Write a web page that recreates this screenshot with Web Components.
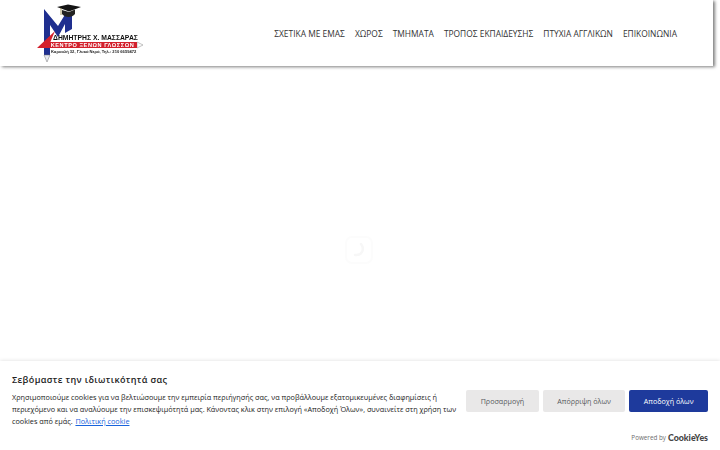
<!DOCTYPE html>
<html lang="el">
<head>
<meta charset="utf-8">
<title>Massaras</title>
<style>
  html, body { margin: 0; height: 100%; background: #fff; overflow: hidden; }
  body { display: flex; flex-direction: column; font-family: "Open Sans", "Noto Sans", sans-serif; }
</style>
</head>
<body>
<site-header>
  <site-logo slot="logo"></site-logo>
  <nav-link>ΣΧΕΤΙΚΑ ΜΕ ΕΜΑΣ</nav-link>
  <nav-link>ΧΩΡΟΣ</nav-link>
  <nav-link>ΤΜΗΜΑΤΑ</nav-link>
  <nav-link>ΤΡΟΠΟΣ ΕΚΠΑΙΔΕΥΣΗΣ</nav-link>
  <nav-link>ΠΤΥΧΙΑ ΑΓΓΛΙΚΩΝ</nav-link>
  <nav-link>ΕΠΙΚΟΙΝΩΝΙΑ</nav-link>
</site-header>
<page-loader></page-loader>
<cookie-banner>
  <span slot="title">Σεβόμαστε την ιδιωτικότητά σας</span>
  <span>Χρησιμοποιούμε cookies για να βελτιώσουμε την εμπειρία περιήγησής σας, να προβάλλουμε εξατομικευμένες διαφημίσεις ή περιεχόμενο και να αναλύουμε την επισκεψιμότητά μας. Κάνοντας κλικ στην επιλογή «Αποδοχή Όλων», συναινείτε στη χρήση των</span>
  <span>cookies από εμάς.</span>
  <a>Πολιτική cookie</a>
  <cookie-button slot="actions">Προσαρμογή</cookie-button>
  <cookie-button slot="actions">Απόρριψη όλων</cookie-button>
  <cookie-button slot="actions" primary>Αποδοχή όλων</cookie-button>
</cookie-banner>

<script>
// small helper so each element stays a few lines
function shadow(el, html) {
  el.attachShadow({ mode: 'open' });
  el.shadowRoot.innerHTML = html;
}

class SiteHeader extends HTMLElement {
  constructor() {
    super();
    shadow(this, `
      <style>
        :host { display: flex; flex: none; height: 66px; margin-right: 7px; box-sizing: border-box;
          align-items: center; justify-content: space-between; padding: 0 36px 0 36px; background: #fff;
          box-shadow: 2px 1px 3px rgba(0,0,0,.5); }
        nav { display: flex; gap: 10px; padding-top: 1px; }
      </style>
      <slot name="logo"></slot>
      <nav><slot></slot></nav>`);
  }
}

class NavLink extends HTMLElement {
  constructor() {
    super();
    shadow(this, `
      <style>
        :host { display: block; font: 400 8.41px/16px "Open Sans", sans-serif; color: #333; white-space: nowrap; }
      </style>
      <slot></slot>`);
  }
}

class SiteLogo extends HTMLElement {
  constructor() {
    super();
    // drawn in header coordinates: y here is the page y, x is page x minus 36
    shadow(this, `
      <style>
        :host { display: block; width: 108px; height: 66px; position: relative; filter: blur(.3px); }
        svg { position: absolute; left: 0; top: 0; }
        .name, .school, .addr { position: absolute; white-space: nowrap; font-family: "Liberation Sans", sans-serif; font-weight: 700; }
        .name { left: 17px; top: 33px; font-size: 6.8px; line-height: 9px; color: #111; }
        .school { left: 12px; top: 42px; width: 89px; height: 6px; background: #d3202c; color: #fff;
          font-size: 5.6px; line-height: 6px; letter-spacing: .55px; text-align: center; }
        .addr { left: 15px; top: 48.5px; font-size: 4.1px; line-height: 6px; color: #222; }
      </style>
      <svg width="108" height="66" viewBox="0 0 108 66">
        <path d="M8 9 L8 55 L14 55 L14 25 L22 37 L29 24 L29 33 L36 29 L36 12 L30 13 L22 26 Z" fill="#1f2f8f"/>
        <path d="M8 55 L11 62 L14 55 Z" fill="#e6e8f0" stroke="#777" stroke-width=".5"/>
        <path d="M1 48 L19 31 L16 38 L12 48 Z" fill="#d3202c"/>
        <path d="M101 42 L107 45 L101 48 Z" fill="#fff" stroke="#999" stroke-width=".6"/>
        <path d="M21 7 L32 4.5 L45 7 L33 11.5 Z" fill="#141414"/>
        <path d="M26 10 L26 14 C29 18 36 18 39 14 L39 9.5 L33 12 Z" fill="#222"/>
        <path d="M25 8 L25 15" stroke="#8d7f3a" stroke-width=".8"/>
      </svg>
      <span class="name">ΔΗΜΗΤΡΗΣ Χ. ΜΑΣΣΑΡΑΣ</span>
      <span class="school">ΚΕΝΤΡΟ ΞΕΝΩΝ ΓΛΩΣΣΩΝ</span>
      <span class="addr">Καραολή 32, Γλυκά Νερά, Τηλ.: 210 6659472</span>`);
  }
}

class PageLoader extends HTMLElement {
  constructor() {
    super();
    shadow(this, `
      <style>
        :host { display: flex; flex: 1; align-items: center; justify-content: center; padding: 72px 2px 0 0; }
        svg { display: block; }
      </style>
      <svg width="30" height="30" viewBox="0 0 30 30" fill="none">
        <rect x="2" y="2" width="26" height="26" rx="6" stroke="#fcfcfc" stroke-width="2"/>
        <path d="M17 9 C21 14 18 21 11 20" stroke="#f7f7f7" stroke-width="2.5" stroke-linecap="round"/>
      </svg>`);
  }
}

class CookieBanner extends HTMLElement {
  constructor() {
    super();
    shadow(this, `
      <style>
        :host { display: block; flex: none; height: 89px; box-sizing: border-box; padding: 12px 12px 0;
          background: #fff; box-shadow: 0 0 4px rgba(0,0,0,.14); color: #212121; }
        h2 { margin: 0 0 4px; font: 600 9px/14px "Open Sans", sans-serif; letter-spacing: .37px; }
        .row { display: flex; justify-content: space-between; align-items: flex-start; }
        p { margin: 0; width: 446px; font: 400 7.27px/12px "Open Sans", sans-serif; color: #212121; }
        ::slotted(a) { color: #1863dc; text-decoration: underline; margin-left: 1px; }
        .actions { display: flex; gap: 4px; margin-top: -1px; }
        footer { display: flex; justify-content: flex-end; align-items: center; gap: 2px; margin-top: 5px;
          font: 400 6.3px/12px "Open Sans", sans-serif; color: #6e6e6e; }
        b { font: 900 8.8px/12px "Lato", sans-serif; color: #444; }
      </style>
      <h2><slot name="title"></slot></h2>
      <div class="row">
        <p><slot></slot></p>
        <div class="actions"><slot name="actions"></slot></div>
      </div>
      <footer>Powered by <b>CookieYes</b></footer>`);
  }
}

class CookieButton extends HTMLElement {
  constructor() {
    super();
    shadow(this, `
      <style>
        :host { display: block; height: 22px; padding: 0 14.5px; border-radius: 2px; background: #e9e8e8; color: #56585c;
          font: 400 7.15px/22px "Open Sans", sans-serif; white-space: nowrap; }
        :host([primary]) { background: #1e3a9c; color: #fff; }
      </style>
      <slot></slot>`);
  }
}

customElements.define('site-header', SiteHeader);
customElements.define('nav-link', NavLink);
customElements.define('site-logo', SiteLogo);
customElements.define('page-loader', PageLoader);
customElements.define('cookie-banner', CookieBanner);
customElements.define('cookie-button', CookieButton);
</script>
</body>
</html>
